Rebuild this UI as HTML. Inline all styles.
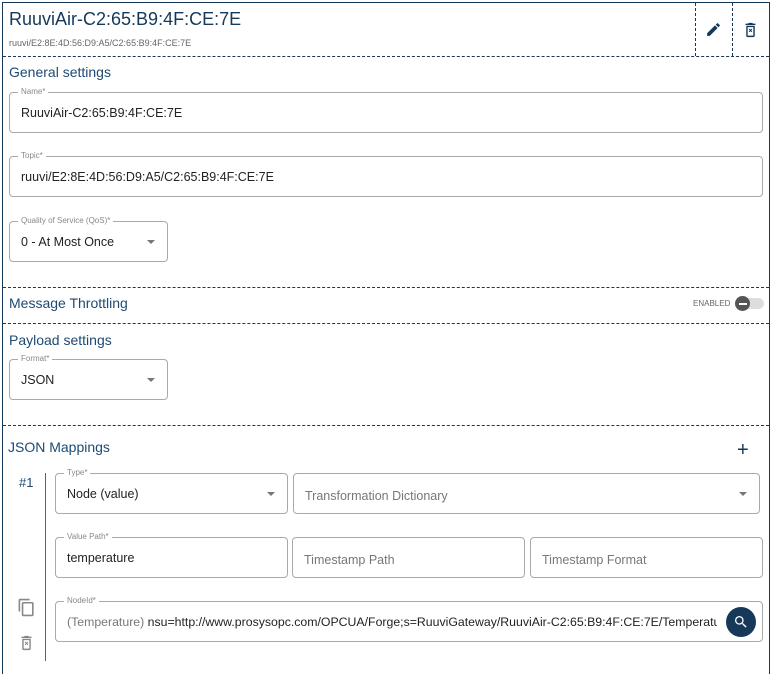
<!DOCTYPE html>
<html><head><meta charset="utf-8"><style>
*{box-sizing:border-box;margin:0;padding:0}
html,body{width:772px;height:674px;overflow:hidden}
body{background:#fff;font-family:"Liberation Sans",sans-serif;position:relative;color:#222}
.a{position:absolute}
.frame{left:2px;top:2px;width:768px;height:700px;border:1.5px solid #16395a;border-bottom:none}
.hd{border-top:1px dashed #16395a;height:0}
.vd{border-left:1px dashed #16395a;width:0}
.h{color:#1d4a73;font-size:14px}
.f{border:1px solid #a9a9a9;border-radius:4px;height:41px}
.lb{position:absolute;top:-6px;left:8px;background:#fff;padding:0 3px;font-size:8px;color:#888;line-height:10px}
.v{position:absolute;left:11px;top:13px;font-size:12.5px;color:#222;white-space:nowrap}
.ph{color:#777}
.dd{position:absolute;right:12px;top:18px;width:0;height:0;border-left:4px solid transparent;border-right:4px solid transparent;border-top:4px solid #777}
</style></head><body>
<div class="a frame"></div>
<div class="a" style="left:9px;top:9px;font-size:18px;color:#16395a">RuuviAir-C2:65:B9:4F:CE:7E</div>
<div class="a" style="left:9px;top:38px;font-size:9px;color:#666">ruuvi/E2:8E:4D:56:D9:A5/C2:65:B9:4F:CE:7E</div>
<div class="a vd" style="left:695px;top:3px;height:53px"></div>
<div class="a vd" style="left:732px;top:3px;height:53px"></div>
<svg class="a" style="left:705px;top:21px" width="17" height="17" viewBox="0 0 24 24"><path fill="#16395a" d="M3 17.25V21h3.75L17.81 9.94l-3.75-3.75L3 17.25zM20.71 7.04a1 1 0 000-1.41l-2.34-2.34a1 1 0 00-1.41 0l-1.83 1.83 3.75 3.75 1.83-1.83z"/></svg>
<svg class="a" style="left:742px;top:21px" width="17" height="18" viewBox="0 0 24 24"><path fill="#16395a" d="M15.5 3l-1-1h-5l-1 1H5v2h14V3zM6 6v14a2 2 0 002 2h8a2 2 0 002-2V6zm2 2h8v12H8zm1.5 3l1.5 1.5-1.5 1.5 1 1 1.5-1.5 1.5 1.5 1-1-1.5-1.5 1.5-1.5-1-1-1.5 1.5-1.5-1.5z"/></svg>
<div class="a hd" style="left:3px;top:56px;width:766px"></div>
<div class="a h" style="left:9px;top:64px">General settings</div>
<div class="a f" style="left:9px;top:92px;width:754px"><span class="lb">Name*</span><span class="v">RuuviAir-C2:65:B9:4F:CE:7E</span></div>
<div class="a f" style="left:9px;top:156px;width:754px"><span class="lb">Topic*</span><span class="v">ruuvi/E2:8E:4D:56:D9:A5/C2:65:B9:4F:CE:7E</span></div>
<div class="a f" style="left:9px;top:221px;width:159px"><span class="lb">Quality of Service (QoS)*</span><span class="v">0 - At Most Once</span><span class="dd"></span></div>
<div class="a hd" style="left:3px;top:287px;width:766px"></div>
<div class="a h" style="left:9px;top:295px">Message Throttling</div>
<div class="a" style="left:693px;top:299px;font-size:8px;color:#666">ENABLED</div>
<div class="a" style="left:738px;top:298px;width:26px;height:11px;border-radius:6px;background:#ddd"></div>
<div class="a" style="left:735px;top:296px;width:15px;height:15px;border-radius:50%;background:#555"></div>
<div class="a" style="left:739px;top:303px;width:8px;height:1.5px;background:#fff"></div>
<div class="a hd" style="left:3px;top:323px;width:766px"></div>
<div class="a h" style="left:9px;top:332px">Payload settings</div>
<div class="a f" style="left:9px;top:359px;width:159px"><span class="lb">Format*</span><span class="v">JSON</span><span class="dd"></span></div>
<div class="a hd" style="left:3px;top:425px;width:766px"></div>
<div class="a h" style="left:8px;top:439px">JSON Mappings</div>
<div class="a" style="left:737px;top:438px;font-size:20px;color:#16395a;line-height:24px">+</div>
<div class="a" style="left:19px;top:475px;font-size:13px;color:#1d4a73">#1</div>
<div class="a" style="left:45px;top:473px;width:1px;height:188px;background:#3a6a99"></div>
<div class="a f" style="left:55px;top:473px;width:233px"><span class="lb">Type*</span><span class="v">Node (value)</span><span class="dd"></span></div>
<div class="a f" style="left:293px;top:473px;width:467px"><span class="v ph" style="top:15px">Transformation Dictionary</span><span class="dd"></span></div>
<div class="a f" style="left:55px;top:537px;width:233px"><span class="lb">Value Path*</span><span class="v">temperature</span></div>
<div class="a f" style="left:292px;top:537px;width:233px"><span class="v ph" style="top:15px">Timestamp Path</span></div>
<div class="a f" style="left:530px;top:537px;width:233px"><span class="v ph" style="top:15px">Timestamp Format</span></div>
<div class="a f" style="left:55px;top:601px;width:708px"><span class="lb">NodeId*</span><span class="v" style="width:650px;overflow:hidden;font-size:12.3px"><span class="ph">(Temperature)</span> nsu=http://www.prosysopc.com/OPCUA/Forge;s=RuuviGateway/RuuviAir-C2:65:B9:4F:CE:7E/Temperature</span></div>
<div class="a" style="left:726px;top:607px;width:30px;height:30px;border-radius:50%;background:#16395a"></div>
<svg class="a" style="left:733px;top:614px" width="16" height="16" viewBox="0 0 24 24"><path fill="#fff" d="M15.5 14h-.79l-.28-.27A6.47 6.47 0 0016 9.5 6.5 6.5 0 109.5 16c1.61 0 3.09-.59 4.230-1.57l.27.28v.79l5 4.99L20.49 19l-4.99-5zm-6 0C7.01 14 5 11.99 5 9.5S7.01 5 9.5 5 14 7.01 14 9.5 11.99 14 9.5 14z"/></svg>
<svg class="a" style="left:17px;top:598px" width="19" height="19" viewBox="0 0 24 24"><path fill="#888" d="M16 1H4a2 2 0 00-2 2v14h2V3h12zm3 4H8a2 2 0 00-2 2v14a2 2 0 002 2h11a2 2 0 002-2V7a2 2 0 00-2-2zm0 16H8V7h11z"/></svg>
<svg class="a" style="left:18px;top:634px" width="17" height="18" viewBox="0 0 24 24"><path fill="#888" d="M15.5 3l-1-1h-5l-1 1H5v2h14V3zM6 6v14a2 2 0 002 2h8a2 2 0 002-2V6zm2 2h8v12H8zm1.5 3l1.5 1.5-1.5 1.5 1 1 1.5-1.5 1.5 1.5 1-1-1.5-1.5 1.5-1.5-1-1-1.5 1.5-1.5-1.5z"/></svg>
</body></html>
